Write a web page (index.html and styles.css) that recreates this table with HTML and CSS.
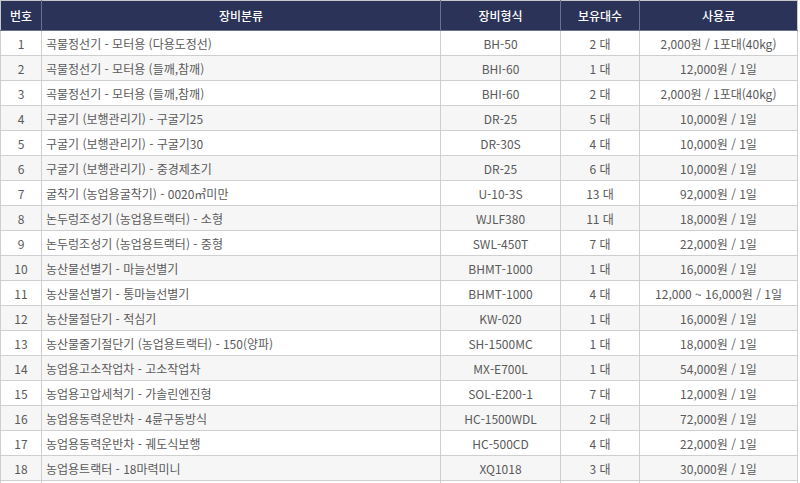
FILE: index.html
```html
<!DOCTYPE html>
<html lang="ko">
<head>
<meta charset="utf-8">
<title>장비 목록</title>
<link rel="stylesheet" href="styles.css">
</head>
<body>
<table class="equip">
  <colgroup>
    <col class="c-no">
    <col class="c-name">
    <col class="c-model">
    <col class="c-qty">
    <col class="c-fee">
  </colgroup>
  <thead>
    <tr>
      <th>번호</th>
      <th>장비분류</th>
      <th>장비형식</th>
      <th>보유대수</th>
      <th>사용료</th>
    </tr>
  </thead>
  <tbody>
    <tr><td>1</td><td class="name">곡물정선기 - 모터용 (다용도정선)</td><td>BH-50</td><td>2 대</td><td>2,000원 / 1포대(40kg)</td></tr>
    <tr><td>2</td><td class="name">곡물정선기 - 모터용 (들깨,참깨)</td><td>BHI-60</td><td>1 대</td><td>12,000원 / 1일</td></tr>
    <tr><td>3</td><td class="name">곡물정선기 - 모터용 (들깨,참깨)</td><td>BHI-60</td><td>2 대</td><td>2,000원 / 1포대(40kg)</td></tr>
    <tr><td>4</td><td class="name">구굴기 (보행관리기) - 구굴기25</td><td>DR-25</td><td>5 대</td><td>10,000원 / 1일</td></tr>
    <tr><td>5</td><td class="name">구굴기 (보행관리기) - 구굴기30</td><td>DR-30S</td><td>4 대</td><td>10,000원 / 1일</td></tr>
    <tr><td>6</td><td class="name">구굴기 (보행관리기) - 중경제초기</td><td>DR-25</td><td>6 대</td><td>10,000원 / 1일</td></tr>
    <tr><td>7</td><td class="name">굴착기 (농업용굴착기) - 0020㎥미만</td><td>U-10-3S</td><td>13 대</td><td>92,000원 / 1일</td></tr>
    <tr><td>8</td><td class="name">논두렁조성기 (농업용트랙터) - 소형</td><td>WJLF380</td><td>11 대</td><td>18,000원 / 1일</td></tr>
    <tr><td>9</td><td class="name">논두렁조성기 (농업용트랙터) - 중형</td><td>SWL-450T</td><td>7 대</td><td>22,000원 / 1일</td></tr>
    <tr><td>10</td><td class="name">농산물선별기 - 마늘선별기</td><td>BHMT-1000</td><td>1 대</td><td>16,000원 / 1일</td></tr>
    <tr><td>11</td><td class="name">농산물선별기 - 통마늘선별기</td><td>BHMT-1000</td><td>4 대</td><td>12,000 ~ 16,000원 / 1일</td></tr>
    <tr><td>12</td><td class="name">농산물절단기 - 적심기</td><td>KW-020</td><td>1 대</td><td>16,000원 / 1일</td></tr>
    <tr><td>13</td><td class="name">농산물줄기절단기 (농업용트랙터) - 150(양파)</td><td>SH-1500MC</td><td>1 대</td><td>18,000원 / 1일</td></tr>
    <tr><td>14</td><td class="name">농업용고소작업차 - 고소작업차</td><td>MX-E700L</td><td>1 대</td><td>54,000원 / 1일</td></tr>
    <tr><td>15</td><td class="name">농업용고압세척기 - 가솔린엔진형</td><td>SOL-E200-1</td><td>7 대</td><td>12,000원 / 1일</td></tr>
    <tr><td>16</td><td class="name">농업용동력운반차 - 4륜구동방식</td><td>HC-1500WDL</td><td>2 대</td><td>72,000원 / 1일</td></tr>
    <tr><td>17</td><td class="name">농업용동력운반차 - 궤도식보행</td><td>HC-500CD</td><td>4 대</td><td>22,000원 / 1일</td></tr>
    <tr><td>18</td><td class="name">농업용트랙터 - 18마력미니</td><td>XQ1018</td><td>3 대</td><td>30,000원 / 1일</td></tr>
    <tr><td></td><td class="name"></td><td></td><td></td><td></td></tr>
  </tbody>
</table>
</body>
</html>
```

FILE: styles.css
```css
html, body {
  margin: 0;
  padding: 0;
  background: #ffffff;
}

.equip {
  width: 797px;
  table-layout: fixed;
  border-collapse: collapse;
  font-family: "Noto Sans CJK KR", "Noto Sans", sans-serif;
  font-size: 12px;
  color: #5a5a5a;
  letter-spacing: 0;
}

.c-no { width: 41px; }
.c-name { width: 399px; }
.c-model { width: 120px; }
.c-qty { width: 79px; }
.c-fee { width: 158px; }

.equip th {
  height: 29px;
  padding: 0;
  background: #2b3358;
  color: #ffffff;
  font-weight: 500;
  font-size: 12px;
  text-align: center;
  border: 1px solid #6a7091;
  border-top-color: #c8c8c8;
}

.equip th:first-child { border-left-color: #c8c8c8; }
.equip th:last-child { border-right-color: #c8c8c8; }

.equip td {
  height: 24px;
  padding: 0;
  text-align: center;
  border: 1px solid #cfcfcf;
  white-space: nowrap;
  overflow: hidden;
}

.equip td.name {
  text-align: left;
  padding-left: 4px;
}

.equip tbody tr:nth-child(even) td {
  background: #f6f6f6;
}
```
